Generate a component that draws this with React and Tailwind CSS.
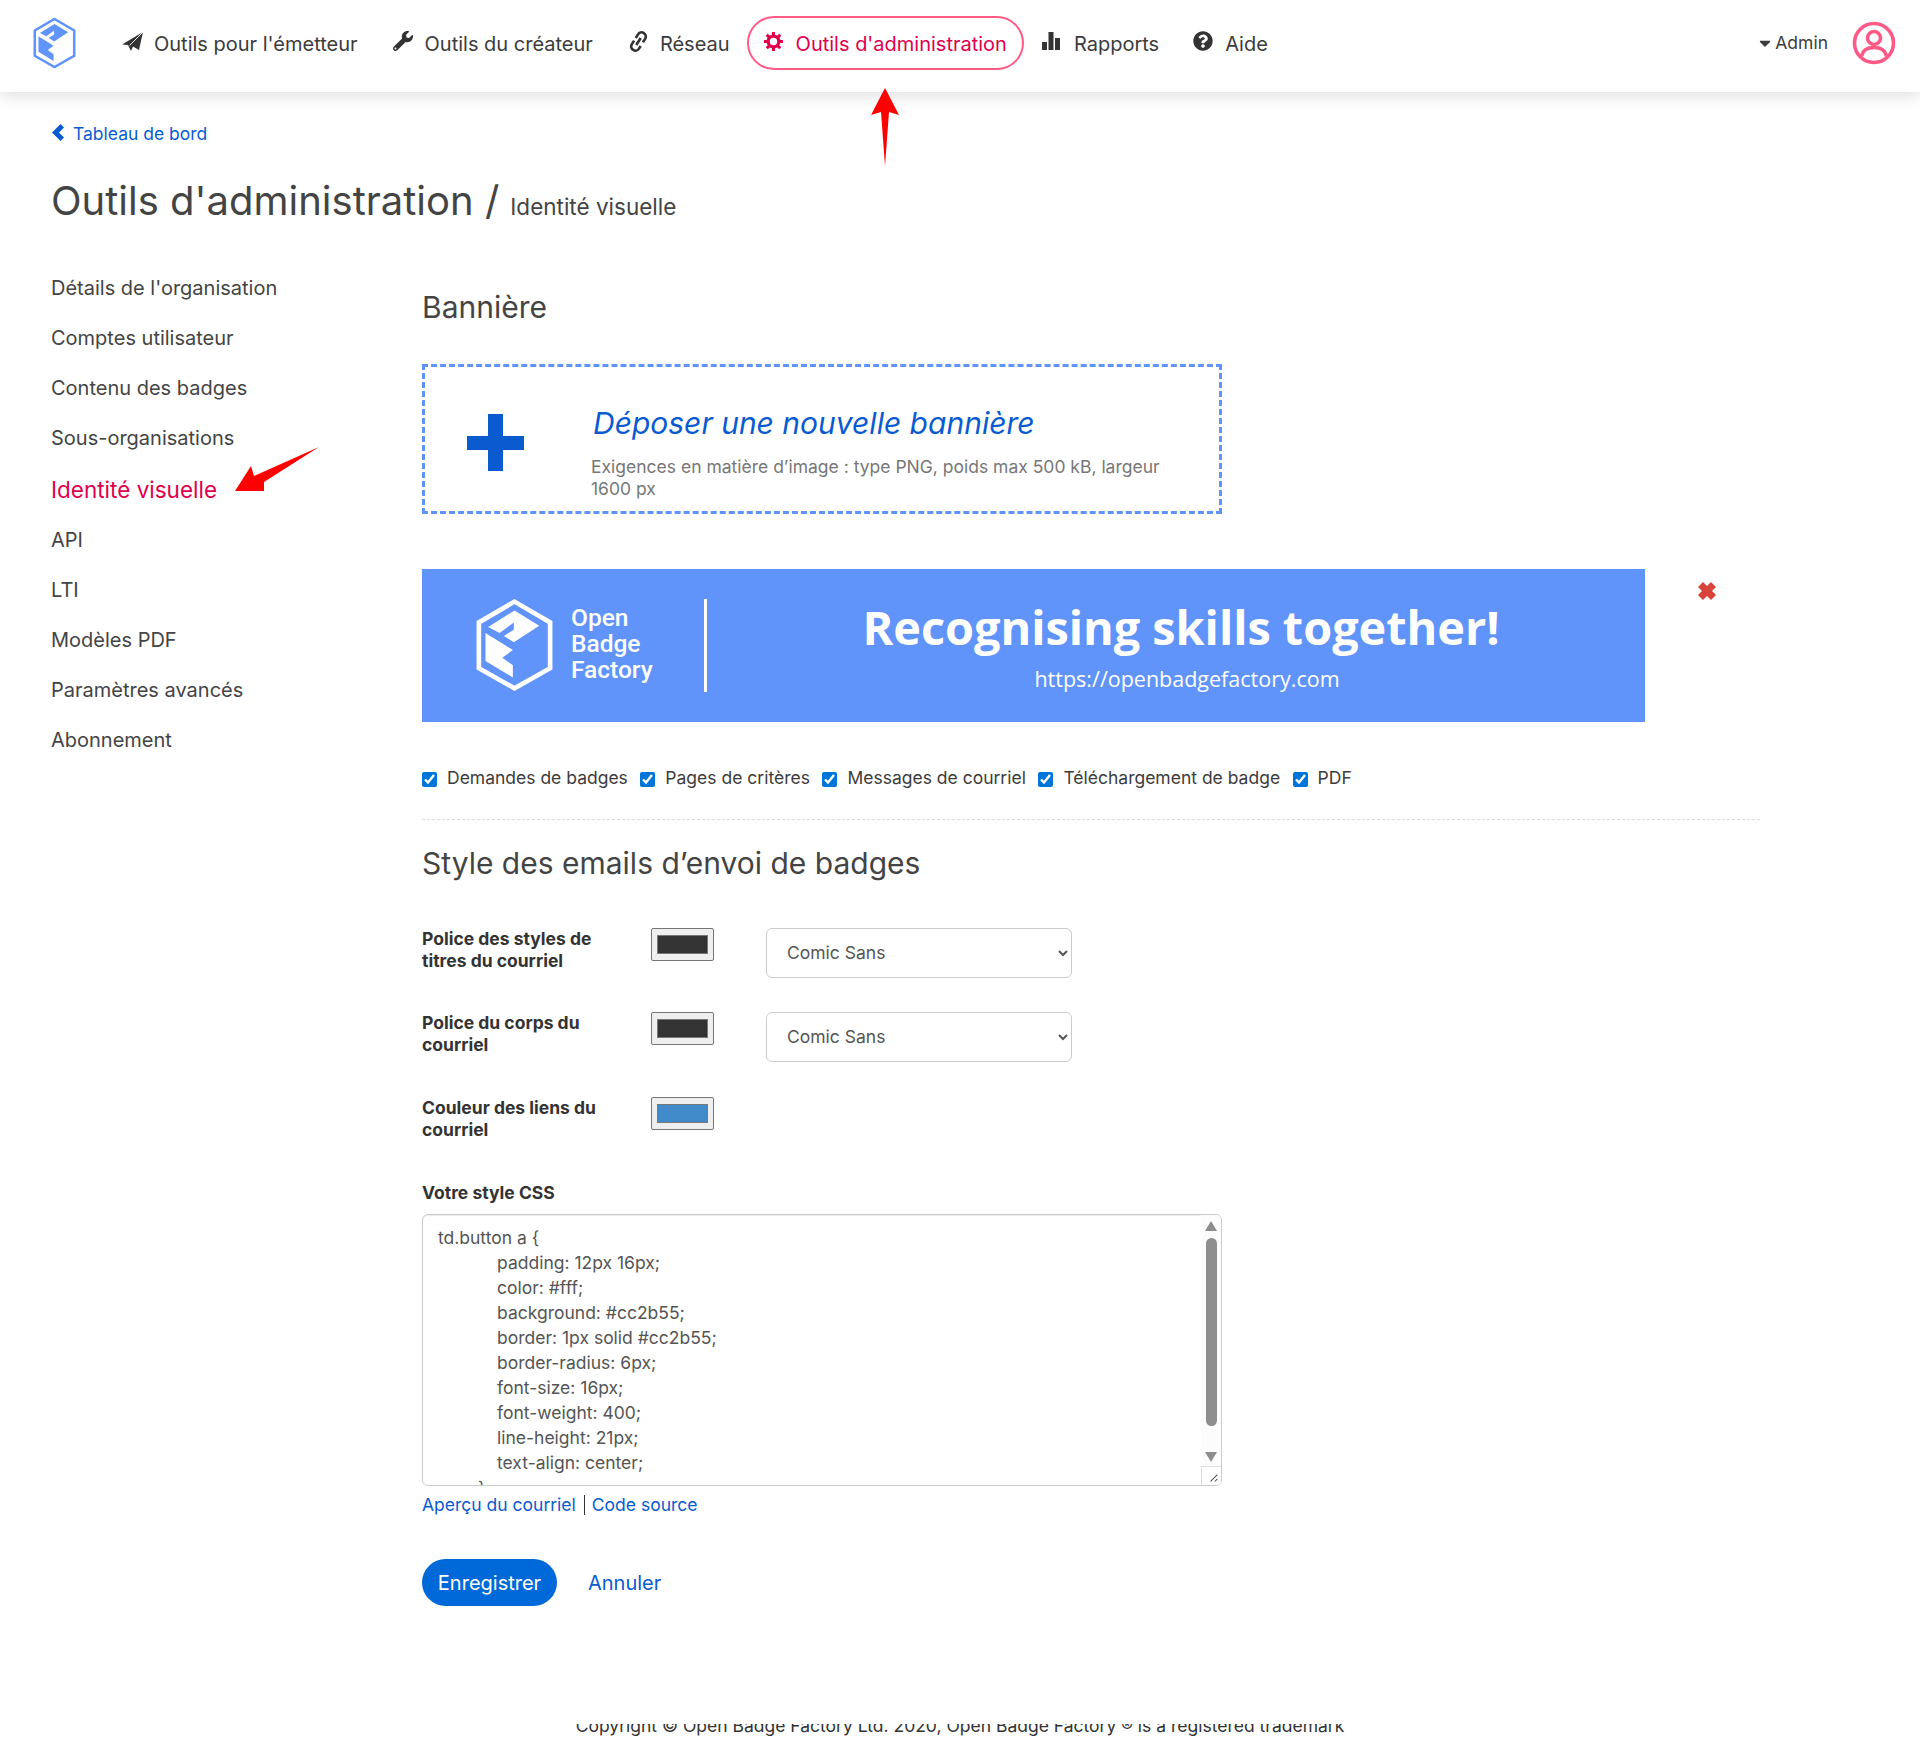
import React from "react";
import { FaWrench, FaQuestionCircle, FaCaretDown } from "react-icons/fa";

function Logo({ color, className }) {
  return (
    <svg viewBox="50 24 230 285" className={className} fill="none">
      <path d="M165 35 L273 98 L273 237 L165 298 L57 237 L57 98 Z" stroke={color} strokeWidth="14" strokeLinejoin="miter" />
      <path d="M85 112 L165 62 L240 108 L163 158 L133 139 L163 120 L163 98 L120 130 Z" fill={color} />
      <path d="M77 130 L160 182 L128 205 L160 228 L160 265 L77 215 Z" fill={color} />
    </svg>
  );
}

function Plane() {
  return (
    <svg viewBox="0 0 21 19" className="w-[21px] h-[19px]" fill="#333">
      <path d="M21 0 L0 12.5 L6 13 L9 19 L11 14.5 L17 18 Z" />
      <path d="M21 0 L7.5 13.5" stroke="#fff" strokeWidth="0.9" fill="none" />
    </svg>
  );
}

function LinkIcon() {
  return (
    <svg viewBox="0 0 20 20" className="w-[21px] h-[21px]" fill="none" stroke="#333" strokeWidth="2.5">
      <g transform="rotate(-58 10 10)">
        <path d="M8.5 6 H4.5 a4 4 0 0 0 0 8 H7.5" />
        <path d="M11.5 6 H15.5 a4 4 0 0 1 0 8 H11.5" />
        <path d="M6 10 H14" />
      </g>
    </svg>
  );
}

function Bars() {
  return (
    <svg viewBox="0 0 18 18" className="w-[18px] h-[18px]" fill="#333">
      <rect x="0" y="10" width="5" height="8" />
      <rect x="6.5" y="0" width="5" height="18" />
      <rect x="13" y="6" width="5" height="12" />
    </svg>
  );
}

function Cog() {
  return (
    <svg viewBox="0 0 20 20" className="w-[19px] h-[19px]" fill="#e0004d">
      <circle cx="10" cy="10" r="5.6" fill="none" stroke="#e0004d" strokeWidth="3.4" />
      {[0, 45, 90, 135, 180, 225, 270, 315].map((a) => (
        <rect key={a} x="8.4" y="0" width="3.2" height="4.5" transform={`rotate(${a} 10 10)`} />
      ))}
    </svg>
  );
}

function NavItem({ icon, label, active, className = "" }) {
  return (
    <a className={`flex items-center text-[20px] leading-[28px] ${active ? "text-[#e0004d] border-2 border-[#ff5986] rounded-[27px] h-[54px] pl-[15px] pr-[15px]" : "text-[#3c3c3c] px-[17px]"} ${className}`}>
      <span className="flex w-[32px] -mt-[4px]">{icon}</span>
      <span className="mt-[1px]">{label}</span>
    </a>
  );
}

function Check({ label }) {
  return (
    <label className="flex items-center gap-[10px] text-[17.5px] leading-[22px] text-[#3c3c3c]">
      <input type="checkbox" defaultChecked className="w-[15px] h-[15px] m-0 mt-[2px] accent-[#0075d9]" />
      <span>{label}</span>
    </label>
  );
}

function Swatch({ color }) {
  return (
    <div className="w-[63px] h-[33px] border border-[#767676] rounded-[2px] bg-[#efefef] flex items-center justify-center shrink-0">
      <div className="w-[51px] h-[19px] border border-[#777]" style={{ backgroundColor: color }} />
    </div>
  );
}

function FontSelect() {
  return (
    <select defaultValue="Comic Sans" className="w-[306px] h-[50px] ml-[52px] border border-[#ccc] rounded-[6px] bg-white pl-[16px] pb-[2px] text-[17.5px] text-[#555]">
      <option>Comic Sans</option>
    </select>
  );
}

function ColorRow({ label, color, select, className }) {
  return (
    <div className={`flex items-start ${className}`}>
      <div className="w-[229px] shrink-0 font-bold text-[17.5px] leading-[22px] text-[#333]">{label}</div>
      <Swatch color={color} />
      {select && <FontSelect />}
    </div>
  );
}

const cssLines = [
  "padding: 12px 16px;",
  "color: #fff;",
  "background: #cc2b55;",
  "border: 1px solid #cc2b55;",
  "border-radius: 6px;",
  "font-size: 16px;",
  "font-weight: 400;",
  "line-height: 21px;",
  "text-align: center;",
];

const side = [
  "Détails de l'organisation",
  "Comptes utilisateur",
  "Contenu des badges",
  "Sous-organisations",
];
const side2 = ["API", "LTI", "Modèles PDF", "Paramètres avancés", "Abonnement"];

export default function App() {
  return (
    <div className="relative w-[1920px] h-[1752px] overflow-hidden bg-white font-['Inter',sans-serif] text-[#444]">
      <header className="h-[92px] bg-white shadow-[0_2px_16px_rgba(0,0,0,0.16)] flex items-center pl-[33px] pr-[24px] pb-[6px] relative">
        <Logo color="#6094fb" className="w-[43px] h-[52px]" />
        <nav className="flex items-center ml-[29px]">
          <NavItem icon={<Plane />} label="Outils pour l'émetteur" />
          <NavItem icon={<FaWrench size={20} color="#333" />} label="Outils du créateur" className="ml-[1px]" />
          <NavItem icon={<LinkIcon />} label="Réseau" className="ml-[1px]" />
          <NavItem icon={<Cog />} label="Outils d'administration" active />
          <NavItem icon={<Bars />} label="Rapports" className="ml-[1px]" />
          <NavItem icon={<FaQuestionCircle size={20} color="#333" />} label="Aide" />
        </nav>
        <div className="ml-auto flex items-center">
          <span className="flex items-center text-[17.5px] text-[#3c3c3c]"><FaCaretDown size={18} className="mr-[1px]" />Admin</span>
          <svg viewBox="0 0 44 44" className="w-[44px] h-[44px] ml-[24px]" fill="none" stroke="#ff5986" strokeWidth="3.6">
            <circle cx="22" cy="22" r="19.5" />
            <circle cx="22" cy="17" r="6.5" />
            <path d="M9.5 35 C11 28 16 26.5 22 26.5 C28 26.5 33 28 34.5 35" />
          </svg>
        </div>
      </header>

      <main className="pl-[51px]">
        <a className="flex items-center gap-[8px] mt-[31px] ml-[1px] text-[17.5px] leading-[22px] text-[#0a5bd0]">
          <svg viewBox="0 0 13 17" className="w-[13px] h-[17px] -mt-[3px]" fill="#0a5bd0">
            <path d="M8.5 0 L12 3.5 L7 8.5 L12 13.5 L8.5 17 L0 8.5 Z" />
          </svg>
          <span>Tableau de bord</span>
        </a>
        <h1 className="mt-[32px] flex items-baseline text-[40px] leading-[48px] font-normal">
          <span>Outils d'administration /</span>
          <span className="ml-[11px] text-[22.5px]">Identité visuelle</span>
        </h1>

        <div className="flex mt-[27px]">
          <aside className="w-[371px] shrink-0 pt-[16px] text-[20px] leading-[28px]">
            <ul className="flex flex-col">
              {side.map((s) => <li key={s} className="h-[50px]">{s}</li>)}
              <li className="mt-[1px] h-[51px] text-[22.5px] leading-[30px] text-[#e0004d]">Identité visuelle</li>
              {side2.map((s) => <li key={s} className="h-[50px]">{s}</li>)}
            </ul>
          </aside>

          <section className="w-[1338px]">
            <h2 className="mt-[31px] text-[30px] leading-[36px] font-normal">Bannière</h2>

            <div className="mt-[39px] w-[800px] h-[150px] border-[3px] border-dashed border-[#5f94fb] flex">
              <div className="w-[166px] shrink-0 relative">
                <div className="absolute left-[42px] top-[47px] w-[57px] h-[57px]">
                  <div className="absolute left-[21px] top-0 w-[15px] h-[57px] bg-[#0a5bd0]" />
                  <div className="absolute left-0 top-[22px] w-[57px] h-[14px] bg-[#0a5bd0]" />
                </div>
              </div>
              <div>
                <div className="mt-[36px] ml-[2px] italic text-[30px] leading-[40px] text-[#0a5bd0]">Déposer une nouvelle bannière</div>
                <div className="mt-[13px] w-[590px] text-[17.5px] leading-[22px] text-[#777]">Exigences en matière d’image : type PNG, poids max 500 kB, largeur 1600 px</div>
              </div>
            </div>

            <div className="mt-[55px] flex items-start">
              <div className="w-[1223px] h-[153px] bg-[#6094fb] flex items-center text-white font-['Open_Sans',sans-serif] shrink-0">
                <Logo color="#ffffff" className="w-[77px] h-[94px] ml-[54px] -mt-[1px]" />
                <div className="ml-[18px] w-[133px] -mt-[4px] text-[24.5px] leading-[26px] font-medium font-['Roboto',sans-serif]">
                  <div>Open</div><div>Badge</div><div>Factory</div>
                </div>
                <div className="w-[3px] h-[93px] bg-white" />
                <div className="ml-[127px] w-[700px] text-center">
                  <div className="pr-[6px] text-[46.8px] leading-[60px] font-bold -mt-[1px]">Recognising skills together!</div>
                  <div className="pl-[6px] mt-[7px] text-[21.5px] leading-[30px]">https://openbadgefactory.com</div>
                </div>
              </div>
              <svg viewBox="0 0 18 18" className="w-[18px] h-[18px] ml-[53px] mt-[13px]" fill="#d9443a">
                <path d="M5 0 L9 4 L13 0 L18 5 L14 9 L18 13 L13 18 L9 14 L5 18 L0 13 L4 9 L0 5 Z" />
              </svg>
            </div>

            <div className="mt-[45px] flex items-center gap-[12.5px]">
              <Check label="Demandes de badges" />
              <Check label="Pages de critères" />
              <Check label="Messages de courriel" />
              <Check label="Téléchargement de badge" />
              <Check label="PDF" />
            </div>

            <div className="mt-[30px] border-t border-dashed border-[#ddd]" />

            <h2 className="mt-[25px] text-[30px] leading-[36px] font-normal">Style des emails d’envoi de badges</h2>

            <ColorRow className="mt-[47px]" label={<>Police des styles de<br />titres du courriel</>} color="#333333" select />
            <ColorRow className="mt-[34px]" label={<>Police du corps du<br />courriel</>} color="#333333" select />
            <ColorRow className="mt-[35px]" label={<>Couleur des liens du<br />courriel</>} color="#428bca" />

            <div className="mt-[41px] font-bold text-[17.5px] leading-[22px] text-[#333]">Votre style CSS</div>

            <div className="relative mt-[10px] w-[800px] h-[272px] border border-[#ccc] rounded-[6px] overflow-hidden text-[17.5px] leading-[25px] text-[#555] px-[15px] pt-[10px] shadow-[inset_0_1px_1px_rgba(0,0,0,0.075)]">
              <div>td.button a {"{"}</div>
              {cssLines.map((l) => <div key={l} className="pl-[59px]">{l}</div>)}
              <div className="pl-[40px]">{"}"}</div>
              <div className="absolute right-0 top-0 bottom-0 w-[20px] bg-[#fcfcfc]">
                <div className="absolute left-[4px] top-[6px] w-0 h-0 border-x-[6.5px] border-x-transparent border-b-[10px] border-b-[#8d8d8d]" />
                <div className="absolute left-[5px] top-[23px] w-[11px] h-[188px] rounded-full bg-[#8d8d8d]" />
                <div className="absolute left-[4px] top-[237px] w-0 h-0 border-x-[6.5px] border-x-transparent border-t-[10px] border-t-[#8d8d8d]" />
                <div className="absolute left-0 bottom-0 w-[20px] h-[19px] border-t border-l border-[#ddd] bg-white">
                  <svg viewBox="0 0 14 14" className="absolute right-[1px] bottom-[1px] w-[12px] h-[12px]" stroke="#555" strokeWidth="1.2"><path d="M3 11 L11 3 M8 11 L11 8" /></svg>
                </div>
              </div>
            </div>

            <div className="mt-[7px] flex items-center text-[17.5px] leading-[24px] text-[#0a5bd0]">
              <a>Aperçu du courriel</a>
              <span className="ml-[8px] mr-[7px] w-[1px] h-[20px] bg-[#333]" />
              <a>Code source</a>
            </div>

            <div className="mt-[42px] flex items-center">
              <button className="w-[135px] h-[47px] rounded-[24px] bg-[#0069d9] text-white text-[20px]">Enregistrer</button>
              <a className="ml-[31px] text-[20px] text-[#0a5bd0]">Annuler</a>
            </div>
          </section>
        </div>
      </main>

      <footer className="absolute left-0 right-0 top-[1724px] h-[14px] overflow-hidden text-center text-[17.5px] leading-[26px] text-[#333]">
        <div className="-mt-[11px]">Copyright © Open Badge Factory Ltd. 2020, Open Badge Factory ® is a registered trademark</div>
      </footer>

      <svg viewBox="0 0 30 78" className="absolute left-[870px] top-[87px] w-[30px] h-[80px]" fill="#ff0000">
        <path d="M15 0 L29 27 L19 24 L15 78 L11 24 L1 27 Z" />
      </svg>
      <svg viewBox="0 0 84 46" className="absolute left-[235px] top-[447px] w-[84px] h-[46px]" fill="#ff0000">
        <path d="M84 0 L29 35 L29 44 L0 44 L16 19 L19 29 Z" />
      </svg>
    </div>
  );
}
